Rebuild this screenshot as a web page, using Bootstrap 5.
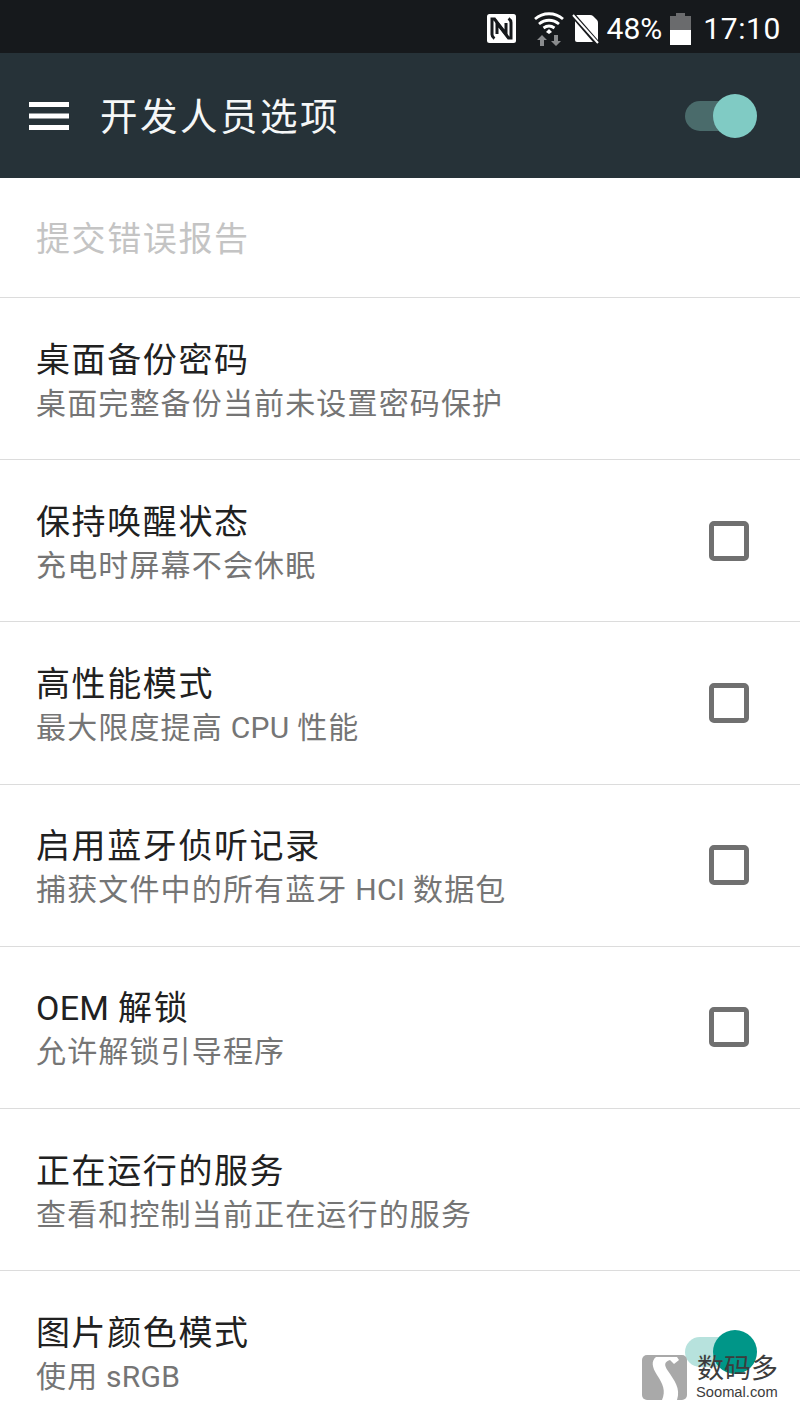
<!DOCTYPE html>
<html lang="zh">
  <head>
    <meta charset="UTF-8" />
    <meta name="viewport" content="width=device-width, initial-scale=1.0" />
    <title>开发人员选项</title>
    <link
      href="https://cdn.jsdelivr.net/npm/bootstrap@5.3.0/dist/css/bootstrap.min.css"
      rel="stylesheet"
    />
    <style>
      body {
        width: 800px;
        height: 1422px;
        overflow: hidden;
        background: #fff;
        font-family: "Roboto", "Noto Sans CJK SC", sans-serif;
      }
      .status-strip {
        height: 53px;
        background: #16191c;
        color: #fff;
        padding: 4px 19px 0 0;
      }
      .status-text {
        font-size: 30px;
        line-height: 1;
      }
      .status-pct {
        margin-left: 8px;
        margin-right: 8px;
      }
      .status-clock {
        margin-left: 12px;
        letter-spacing: 0.6px;
      }
      .nfc-icon {
        margin-right: 18px;
      }
      .wifi-icon {
        margin-right: 8px;
      }
      .tool-strip {
        height: 125px;
        background: #263238;
        color: #fff;
        padding: 0 43px 0 29px;
      }
      .tool-title {
        font-size: 37.5px;
        line-height: 1;
        margin-left: 31px;
        padding-top: 5px;
        letter-spacing: 2.5px;
        color: #f5f7f7;
      }
      .set-row {
        height: 162.2px;
        padding: 0 51px 0 36px;
        border-bottom: 1px solid #dcdcdc;
      }
      .set-row.first-row {
        height: 120px;
      }
      .set-text {
        padding-top: 6px;
      }
      .first-row .set-text {
        padding-top: 2px;
      }
      .set-title {
        font-size: 34px;
        line-height: 44px;
        color: #212121;
        letter-spacing: 1.6px;
      }
      .set-title.off {
        color: #c4c4c4;
      }
      .set-sub {
        font-size: 30px;
        line-height: 44px;
        color: #757575;
        letter-spacing: 1.15px;
      }
      .latin-run {
        letter-spacing: 0.3px;
      }
      .tick-box {
        width: 40px;
        height: 40px;
        border: 5px solid #707070;
        border-radius: 5px;
      }
      .sw-track {
        position: relative;
        width: 72px;
        height: 44px;
      }
      .sw-track::before {
        content: "";
        position: absolute;
        left: 0;
        top: 7px;
        width: 62px;
        height: 30px;
        border-radius: 15px;
        background: #4a6b6b;
      }
      .sw-track::after {
        content: "";
        position: absolute;
        right: 0;
        top: 0;
        width: 44px;
        height: 44px;
        border-radius: 50%;
        background: #80cbc4;
      }
      .sw-track.on-light {
        margin-right: -8px;
      }
      .sw-track.on-light::before {
        background: #b7e2dd;
      }
      .sw-track.on-light::after {
        background: #009688;
      }
      .water-mark {
        position: absolute;
        left: 642px;
        top: 1355px;
        width: 150px;
        height: 50px;
      }
      .water-cn {
        position: absolute;
        left: 55px;
        top: -3px;
        font-family: "Noto Sans CJK SC", sans-serif;
        font-size: 27px;
        line-height: 30px;
        color: #3c3c3c;
        white-space: nowrap;
      }
      .water-en {
        position: absolute;
        left: 54px;
        top: 27px;
        font-family: "Liberation Sans", sans-serif;
        font-size: 14.7px;
        line-height: 20px;
        color: #3c3c3c;
      }
    </style>
  </head>
  <body class="position-relative">
    <div class="status-strip d-flex align-items-center justify-content-end">
      <!-- NFC -->
      <svg class="nfc-icon" width="29" height="29" viewBox="0 0 29 29">
        <rect width="29" height="29" rx="2.500" fill="#fff" />
        <path d="M7.500 24.500c-1.500-1-2.500-2-2.500-4V5h2.500l11.500 15V9" fill="none" stroke="#16191c" stroke-width="3" />
        <path d="M21.500 4.500c1.500 1 2.500 2 2.500 4V24h-2.500L10 9v11" fill="none" stroke="#16191c" stroke-width="3" />
      </svg>
      <!-- wifi -->
      <svg class="wifi-icon" width="30" height="34" viewBox="0 0 30 34">
        <path d="M1 7C9 0 21 0 29 7M5 12C11 7 19 7 25 12M9.500 16C13 13.500 17 13.500 20.500 16" fill="none" stroke="#fff" stroke-width="2.800" />
        <path d="M15 17l3 3-3 2-3-2z" fill="#fff" />
        <path d="M8 23l-5 5h3v6h4v-6h3zM22 34l5-5h-3v-6h-4v6h-3z" fill="#8a8c8e" />
      </svg>
      <!-- no sim -->
      <svg width="27" height="30" viewBox="0 0 27 30">
        <path d="M3 3q0-2 2-2h13q2 0 3 1l4 4q1 1 1 3v17q0 2-2 2H5q-2 0-2-2z" fill="#fff" />
        <path d="M0 0l26 30" stroke="#16191c" stroke-width="5" />
        <path d="M1 1l25 28" stroke="#fff" stroke-width="2" />
      </svg>
      <span class="status-text status-pct">48%</span>
      <!-- battery -->
      <svg width="21" height="32" viewBox="0 0 21 32">
        <path d="M6 0h9v3h6v14H0V3h6z" fill="#6a6b6d" />
        <rect y="17" width="21" height="15" fill="#fff" />
      </svg>
      <span class="status-text status-clock">17:10</span>
    </div>

    <div class="tool-strip d-flex align-items-center">
      <svg width="40" height="28" viewBox="0 0 40 28">
        <path d="M0 2.500h40M0 14h40M0 25.500h40" stroke="#fff" stroke-width="5" />
      </svg>
      <div class="tool-title flex-grow-1">开发人员选项</div>
      <div class="sw-track"></div>
    </div>

    <div id="settings"></div>

    <div class="water-mark">
      <svg width="45" height="45" viewBox="0 0 45 45">
        <rect width="45" height="45" rx="5" fill="#a9a9a9" />
        <path d="M14 2C9 6 10 12 15 20c6 9 9 16 5 25h15c4-12-3-20-9-29-4-6-4-9 2-11l4 4 5-4-2-3z" fill="#fff" />
      </svg>
      <span class="water-cn">数码多</span>
      <span class="water-en">Soomal.com</span>
    </div>

    <script>
      // danh sách các dòng cài đặt
      const latin = (s) => `<span class="latin-run">${s}</span>`;
      const rows = [
        { title: "提交错误报告", off: true },
        { title: "桌面备份密码", sub: "桌面完整备份当前未设置密码保护" },
        { title: "保持唤醒状态", sub: "充电时屏幕不会休眠", box: true },
        { title: "高性能模式", sub: `最大限度提高${latin(" CPU ")}性能`, box: true },
        { title: "启用蓝牙侦听记录", sub: `捕获文件中的所有蓝牙${latin(" HCI ")}数据包`, box: true },
        { title: `${latin("OEM ")}解锁`, sub: "允许解锁引导程序", box: true },
        { title: "正在运行的服务", sub: "查看和控制当前正在运行的服务" },
        { title: "图片颜色模式", sub: `使用${latin(" sRGB")}`, sw: true },
      ];

      document.getElementById("settings").innerHTML = rows
        .map((r, i) => {
          let right = "";
          if (r.box) right = '<div class="tick-box"></div>';
          if (r.sw) right = '<div class="sw-track on-light"></div>';
          return `<div class="set-row d-flex align-items-center justify-content-between ${i === 0 ? "first-row" : ""}">
            <div class="set-text">
              <div class="set-title ${r.off ? "off" : ""}">${r.title}</div>
              ${r.sub ? `<div class="set-sub">${r.sub}</div>` : ""}
            </div>
            ${right}
          </div>`;
        })
        .join("");
    </script>

    <script src="https://cdn.jsdelivr.net/npm/bootstrap@5.3.0/dist/js/bootstrap.bundle.min.js"></script>
  </body>
</html>
